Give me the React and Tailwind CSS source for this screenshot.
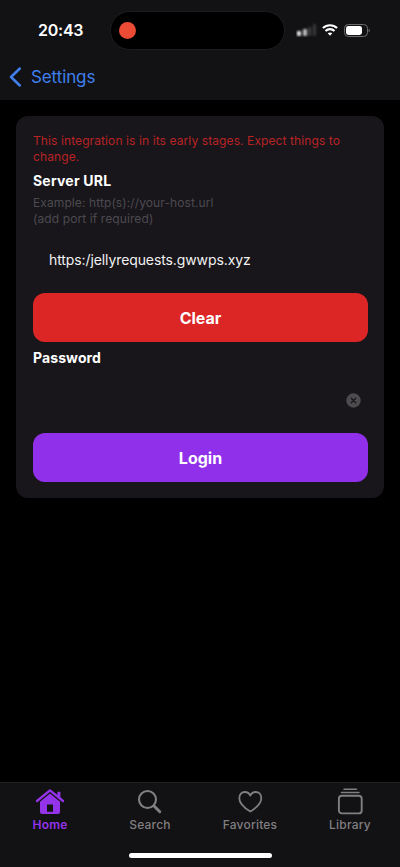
import React from "react";

function StatusBar() {
  return (
    <div className="flex h-[60px] items-center pl-[38px]">
      <span className="w-[72px] text-[16px] leading-5 font-semibold tracking-[-0.25px] text-white">20:43</span>
      <div className="flex h-[39px] w-[175px] items-center rounded-full border border-[#1d1c1f] bg-black pl-[8px]">
        <span className="h-[17px] w-[17px] rounded-full bg-[#ec4b35]" />
      </div>
      <svg className="ml-[11px]" width="22" height="14" viewBox="0 0 22 14">
        <g className="blur-[0.9px]">
          <rect x="1" y="8" width="4" height="5" rx="1" fill="#e6e6e8" />
          <rect x="7" y="6" width="4" height="7" rx="1" fill="#bcbcbe" />
          <rect x="12" y="4" width="3.5" height="9" rx="1" fill="#39383b" />
          <rect x="17" y="1" width="3" height="12" rx="1" fill="#39383b" />
        </g>
      </svg>
      <svg className="ml-[4px]" width="16" height="12" viewBox="0 0 16 12" fill="none" stroke="#fff" strokeWidth="2.1">
        <path d="M0.9 4.1C4.9 0.2 11.1 0.2 15.1 4.1" />
        <path d="M3.5 7C6 4.5 10 4.5 12.5 7" />
        <path d="M8 11.7L5.7 9.3C7 8.1 9 8.1 10.3 9.3Z" fill="#fff" stroke="none" />
      </svg>
      <svg className="ml-[6px]" width="26" height="13" viewBox="0 0 26 13">
        <rect x="0.5" y="0.5" width="23" height="12" rx="3.8" fill="none" stroke="#6c6b6e" />
        <rect x="2" y="2" width="16" height="9" rx="2.4" fill="#fff" />
        <path d="M24.7 4.7C26 5.2 26 7.8 24.7 8.3Z" fill="#7c7b7e" />
      </svg>
    </div>
  );
}

function Tab({ label, active, children }) {
  return (
    <div className={"flex flex-1 flex-col items-center " + (active ? "text-[#9333ea]" : "text-[#807f81]")}>
      <svg width="32" height="30" viewBox="0 0 32 30" fill="none" stroke="currentColor" strokeWidth="1.8" strokeLinecap="round" strokeLinejoin="round">
        {children}
      </svg>
      <span className={"text-[12px] leading-4 tracking-[0.2px] " + (active ? "font-semibold" : "font-medium")}>{label}</span>
    </div>
  );
}

export default function App() {
  return (
    <div className="flex h-[867px] w-[400px] flex-col overflow-hidden bg-black font-['Inter','Liberation_Sans',sans-serif]">
      <header className="h-[100px] shrink-0 bg-[#121114]">
        <StatusBar />
        <div className="flex h-[34px] items-center pl-[9px] text-[#3f80ed]">
          <svg width="13" height="20" viewBox="0 0 13 20" fill="none" stroke="currentColor" strokeWidth="2.5" strokeLinecap="round" strokeLinejoin="round">
            <path d="M10.8 1.5L2 10L10.8 18.5" />
          </svg>
          <span className="ml-[9px] text-[17px] leading-6 tracking-[-0.1px]">Settings</span>
        </div>
      </header>

      <main className="flex-1 px-4 pt-4">
        <section className="flex h-[382px] flex-col rounded-xl bg-[#18161a] pt-[17px] pr-4 pl-[17px]">
          <p className="text-[12px] leading-4 tracking-[0.1px] whitespace-nowrap text-[#b82326]">
            This integration is in its early stages. Expect things to<br />change.
          </p>
          <label className="mt-[6px] text-[14px] leading-5 font-bold tracking-[0.2px] text-white">Server URL</label>
          <p className="mt-[4px] text-[12px] leading-4 tracking-[0.1px] text-[#4c4a51]">
            Example: http(s)://your-host.url<br />(add port if required)
          </p>
          <div className="mt-[7px] flex h-[50px] items-center px-4 text-[14px] tracking-[-0.1px] text-[#f1f1f2]">https:/jellyrequests.gwwps.xyz</div>
          <button className="mt-[9px] h-[49px] w-full shrink-0 rounded-xl bg-[#dc2626] text-[16px] font-bold text-white">Clear</button>
          <label className="mt-[6px] text-[14px] leading-5 font-bold tracking-[0.1px] text-white">Password</label>
          <div className="mt-[8px] flex h-[48px] items-center justify-end pr-[7px]">
            <svg width="15" height="15" viewBox="0 0 15 15">
              <circle cx="7.5" cy="7.5" r="7.2" fill="#4d4b4e" />
              <path d="M5.2 5.2L9.8 9.8M9.8 5.2L5.2 9.8" stroke="#18161a" strokeWidth="1.3" strokeLinecap="round" />
            </svg>
          </div>
          <button className="mt-[9px] h-[49px] w-full shrink-0 rounded-xl bg-[#9130eb] text-[16px] font-bold text-white">Login</button>
        </section>
      </main>

      <footer className="flex h-[85px] shrink-0 flex-col border-t border-[#201f21] bg-[#121113]">
        <nav className="flex h-[71px] pt-[4px]">
          <Tab label="Home" active>
            <path d="M3 14L16 3.4L29 14" strokeWidth="2.4" />
            <path d="M23.4 4.8H26.4V11L23.4 8.6Z" fill="currentColor" stroke="none" />
            <path fillRule="evenodd" d="M16 6.6L26 14.8V25Q26 27 24 27H8Q6 27 6 25V14.8ZM13 17.5V24.8H19V17.5Z" fill="currentColor" stroke="none" />
          </Tab>
          <Tab label="Search">
            <circle cx="13.5" cy="12.5" r="8.5" strokeWidth="2.1" />
            <path d="M20 19L25.8 24.8" strokeWidth="2.9" />
          </Tab>
          <Tab label="Favorites">
            <path d="M16.3 24.6C9.6 20.4 5.3 15.8 5.3 11.2C5.3 7.4 7.7 5 10.9 5C13.3 5 15.2 6.2 16.3 8.6C17.4 6.2 19.3 5 21.7 5C24.9 5 27.3 7.4 27.3 11.2C27.3 15.8 23 20.4 16.3 24.6Z" />
          </Tab>
          <Tab label="Library">
            <path d="M10 2.2H22.5M7.5 5.5H25" strokeWidth="1.5" />
            <rect x="4.9" y="8.8" width="22.8" height="17.6" rx="3" strokeWidth="1.9" />
          </Tab>
        </nav>
        <div className="mx-auto h-[5px] w-[143px] translate-y-[-1px] rounded-full bg-white" />
      </footer>
    </div>
  );
}
